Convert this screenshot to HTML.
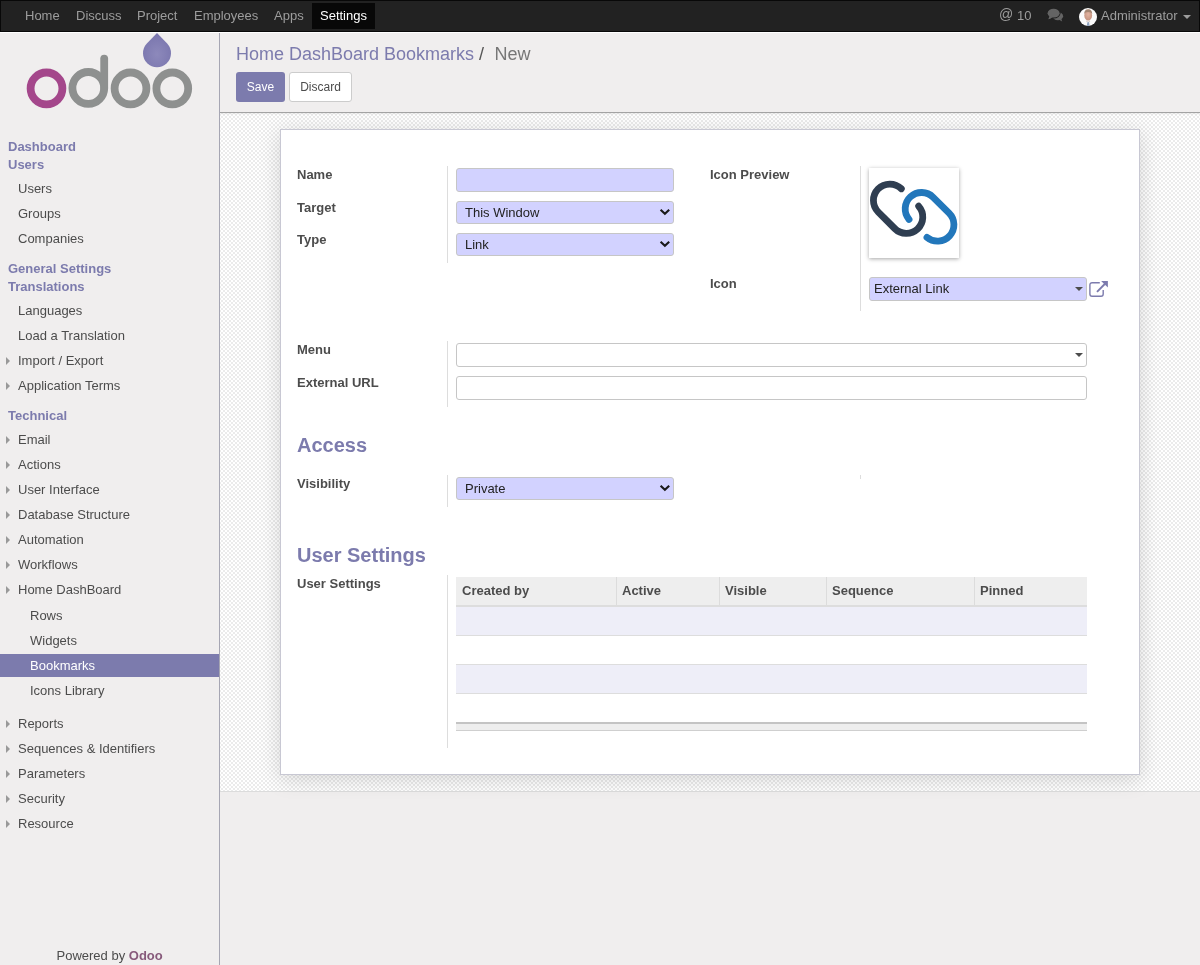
<!DOCTYPE html>
<html><head><meta charset="utf-8"><title>Odoo</title>
<style>
html,body{margin:0;padding:0;width:1200px;height:965px;overflow:hidden;background:#f0eeee;font-family:'Liberation Sans',sans-serif;}
.t{position:absolute;white-space:nowrap;line-height:20px;font-family:'Liberation Sans',sans-serif;}
.b{position:absolute;}
.btn{position:absolute;font-size:12px;line-height:30px;text-align:center;box-sizing:content-box;font-family:'Liberation Sans',sans-serif;}
.inp{position:absolute;border:1px solid #c6c6c6;border-radius:3px;}
.chk{background-color:#fff;background-image:repeating-conic-gradient(#ebebeb 0 25%,#fff 0 50%);
 background-size:4px 4px;background-position:1px 1px;}
</style></head><body><div id="root" style="position:absolute;left:0;top:0;width:1200px;height:965px;will-change:transform">
<div class="b" style="left:0px;top:0px;width:1200px;height:32px;background:#222;border:1px solid #080808;box-sizing:border-box;"></div>
<div class="b" style="left:312px;top:3px;width:63px;height:26px;background:#080808;"></div>
<div class="t" style="left:25px;top:6px;font-size:13px;color:#9d9d9d;">Home</div>
<div class="t" style="left:76px;top:6px;font-size:13px;color:#9d9d9d;">Discuss</div>
<div class="t" style="left:137px;top:6px;font-size:13px;color:#9d9d9d;">Project</div>
<div class="t" style="left:194px;top:6px;font-size:13px;color:#9d9d9d;">Employees</div>
<div class="t" style="left:274px;top:6px;font-size:13px;color:#9d9d9d;">Apps</div>
<div class="t" style="left:320px;top:6px;font-size:13px;color:#fff;">Settings</div>
<div class="t" style="left:999px;top:0px;font-size:14px;line-height:24px;color:#9d9d9d;transform:scaleY(1.1);transform-origin:0 0;">@</div>
<div class="t" style="left:1017px;top:6px;font-size:13px;color:#9d9d9d;">10</div>
<svg class="b" style="left:1047px;top:8px" width="17" height="15" viewBox="0 0 17 15">
<ellipse cx="10.8" cy="8.2" rx="5.3" ry="4.0" fill="#646464"/>
<path d="M12.2 11.8 L15.2 13.4 L14.2 10.6 Z" fill="#646464"/>
<path d="M2.3 8.2 L1.6 11.3 L5.6 9.4 Z" fill="#646464" stroke="#222" stroke-width="0"/>
<ellipse cx="6.6" cy="5.2" rx="6.9" ry="5.2" fill="#222"/>
<ellipse cx="6.6" cy="5.2" rx="6.0" ry="4.4" fill="#646464"/>
<path d="M2.4 8.0 L1.6 11.2 L5.8 9.2 Z" fill="#646464"/>
</svg>
<svg class="b" style="left:1079px;top:8px" width="18" height="18" viewBox="0 0 18 18">
<defs><clipPath id="av"><circle cx="9" cy="9" r="9"/></clipPath>
<radialGradient id="fg" cx="0.5" cy="0.4" r="0.6"><stop offset="0" stop-color="#e2b3a0"/><stop offset="1" stop-color="#c4927e"/></radialGradient></defs>
<g clip-path="url(#av)"><rect width="18" height="18" fill="#fbfbfb"/>
<ellipse cx="9.2" cy="7.4" rx="3.9" ry="5.2" fill="url(#fg)"/>
<path d="M5.2 6.2C5.0 2.8 6.8 1.2 9.2 1.2s4.2 1.6 4 5c-0.5-1.5-2-2.3-4-2.3s-3.5 0.8-4 2.3z" fill="#a48672"/>
<path d="M7.6 12.2c0.5 0.8 1 1.2 1.6 1.2s1.1-0.4 1.6-1.2l0.4 1.8-2 0.6-2-0.6z" fill="#d8d0cc"/>
<path d="M8.3 14.4l0.9-0.4 0.9 0.4 0.5 3.6h-2.8z" fill="#8fa3c0"/>
</g></svg>
<div class="t" style="left:1101px;top:6px;font-size:13px;color:#9d9d9d;">Administrator</div>
<div class="b" style="left:1183px;top:15px;width:0;height:0;border-left:4px solid transparent;border-right:4px solid transparent;border-top:4px solid #9d9d9d;"></div>
<div class="b" style="left:0px;top:32px;width:1200px;height:1px;background:#fff;"></div>
<div class="b" style="left:0px;top:33px;width:219px;height:932px;background:#f0eeee;"></div>
<div class="b" style="left:219px;top:33px;width:1px;height:932px;background:#a6a6b3;"></div>
<svg class="b" style="left:0px;top:33px" width="219" height="80" viewBox="0 33 219 80">
<defs><radialGradient id="dg" cx="0.5" cy="0.62" r="0.6"><stop offset="0" stop-color="#8d89bb"/><stop offset="1" stop-color="#7a76ae"/></radialGradient></defs>
<circle cx="46.5" cy="88.4" r="15.9" fill="none" stroke="#a4478b" stroke-width="7.8"/>
<circle cx="88.3" cy="87.9" r="15.9" fill="none" stroke="#8e908f" stroke-width="7.8"/>
<line x1="104.2" y1="58.6" x2="104.2" y2="87.9" stroke="#8e908f" stroke-width="7.8" stroke-linecap="round"/>
<circle cx="130.5" cy="88.4" r="15.9" fill="none" stroke="#8e908f" stroke-width="7.8"/>
<circle cx="172.3" cy="88.4" r="15.9" fill="none" stroke="#8e908f" stroke-width="7.8"/>
<path d="M157 33 L146.6 43.8 A14 14 0 1 0 167.4 43.8 Z" fill="url(#dg)"/>
</svg>
<div class="t" style="left:8px;top:137px;font-size:13px;font-weight:bold;color:#7c7bad;">Dashboard</div>
<div class="t" style="left:8px;top:155px;font-size:13px;font-weight:bold;color:#7c7bad;">Users</div>
<div class="t" style="left:8px;top:259px;font-size:13px;font-weight:bold;color:#7c7bad;">General Settings</div>
<div class="t" style="left:8px;top:277px;font-size:13px;font-weight:bold;color:#7c7bad;">Translations</div>
<div class="t" style="left:8px;top:406px;font-size:13px;font-weight:bold;color:#7c7bad;">Technical</div>
<div class="b" style="left:0px;top:654px;width:219px;height:23px;background:#7c7bad;"></div>
<div class="t" style="left:18px;top:179px;font-size:13px;color:#4c4c4c;">Users</div>
<div class="t" style="left:18px;top:204px;font-size:13px;color:#4c4c4c;">Groups</div>
<div class="t" style="left:18px;top:229px;font-size:13px;color:#4c4c4c;">Companies</div>
<div class="t" style="left:18px;top:301px;font-size:13px;color:#4c4c4c;">Languages</div>
<div class="t" style="left:18px;top:326px;font-size:13px;color:#4c4c4c;">Load a Translation</div>
<div class="t" style="left:18px;top:351px;font-size:13px;color:#4c4c4c;">Import / Export</div>
<div class="b" style="left:6px;top:357px;width:0;height:0;border-top:4px solid transparent;border-bottom:4px solid transparent;border-left:4px solid #999;"></div>
<div class="t" style="left:18px;top:376px;font-size:13px;color:#4c4c4c;">Application Terms</div>
<div class="b" style="left:6px;top:382px;width:0;height:0;border-top:4px solid transparent;border-bottom:4px solid transparent;border-left:4px solid #999;"></div>
<div class="t" style="left:18px;top:430px;font-size:13px;color:#4c4c4c;">Email</div>
<div class="b" style="left:6px;top:436px;width:0;height:0;border-top:4px solid transparent;border-bottom:4px solid transparent;border-left:4px solid #999;"></div>
<div class="t" style="left:18px;top:455px;font-size:13px;color:#4c4c4c;">Actions</div>
<div class="b" style="left:6px;top:461px;width:0;height:0;border-top:4px solid transparent;border-bottom:4px solid transparent;border-left:4px solid #999;"></div>
<div class="t" style="left:18px;top:480px;font-size:13px;color:#4c4c4c;">User Interface</div>
<div class="b" style="left:6px;top:486px;width:0;height:0;border-top:4px solid transparent;border-bottom:4px solid transparent;border-left:4px solid #999;"></div>
<div class="t" style="left:18px;top:505px;font-size:13px;color:#4c4c4c;">Database Structure</div>
<div class="b" style="left:6px;top:511px;width:0;height:0;border-top:4px solid transparent;border-bottom:4px solid transparent;border-left:4px solid #999;"></div>
<div class="t" style="left:18px;top:530px;font-size:13px;color:#4c4c4c;">Automation</div>
<div class="b" style="left:6px;top:536px;width:0;height:0;border-top:4px solid transparent;border-bottom:4px solid transparent;border-left:4px solid #999;"></div>
<div class="t" style="left:18px;top:555px;font-size:13px;color:#4c4c4c;">Workflows</div>
<div class="b" style="left:6px;top:561px;width:0;height:0;border-top:4px solid transparent;border-bottom:4px solid transparent;border-left:4px solid #999;"></div>
<div class="t" style="left:18px;top:580px;font-size:13px;color:#4c4c4c;">Home DashBoard</div>
<div class="b" style="left:6px;top:586px;width:0;height:0;border-top:4px solid transparent;border-bottom:4px solid transparent;border-left:4px solid #999;"></div>
<div class="t" style="left:30px;top:606px;font-size:13px;color:#4c4c4c;">Rows</div>
<div class="t" style="left:30px;top:631px;font-size:13px;color:#4c4c4c;">Widgets</div>
<div class="t" style="left:30px;top:656px;font-size:13px;color:#fff;">Bookmarks</div>
<div class="t" style="left:30px;top:681px;font-size:13px;color:#4c4c4c;">Icons Library</div>
<div class="t" style="left:18px;top:714px;font-size:13px;color:#4c4c4c;">Reports</div>
<div class="b" style="left:6px;top:720px;width:0;height:0;border-top:4px solid transparent;border-bottom:4px solid transparent;border-left:4px solid #999;"></div>
<div class="t" style="left:18px;top:739px;font-size:13px;color:#4c4c4c;">Sequences &amp; Identifiers</div>
<div class="b" style="left:6px;top:745px;width:0;height:0;border-top:4px solid transparent;border-bottom:4px solid transparent;border-left:4px solid #999;"></div>
<div class="t" style="left:18px;top:764px;font-size:13px;color:#4c4c4c;">Parameters</div>
<div class="b" style="left:6px;top:770px;width:0;height:0;border-top:4px solid transparent;border-bottom:4px solid transparent;border-left:4px solid #999;"></div>
<div class="t" style="left:18px;top:789px;font-size:13px;color:#4c4c4c;">Security</div>
<div class="b" style="left:6px;top:795px;width:0;height:0;border-top:4px solid transparent;border-bottom:4px solid transparent;border-left:4px solid #999;"></div>
<div class="t" style="left:18px;top:814px;font-size:13px;color:#4c4c4c;">Resource</div>
<div class="b" style="left:6px;top:820px;width:0;height:0;border-top:4px solid transparent;border-bottom:4px solid transparent;border-left:4px solid #999;"></div>
<div class="t" style="left:56.5px;top:946px;font-size:13px;color:#4c4c4c;">Powered by <b style="color:#875a7b">Odoo</b></div>
<div class="b" style="left:220px;top:33px;width:980px;height:79px;background:#f0eeee;"></div>
<div class="b" style="left:220px;top:112px;width:980px;height:1px;background:#a3a3a3;"></div>
<div class="t" style="left:236px;top:44px;font-size:18px;color:#7c7bad;">Home DashBoard Bookmarks</div>
<div class="t" style="left:479px;top:44px;font-size:18px;color:#555;">/</div>
<div class="t" style="left:494.6px;top:44px;font-size:18px;color:#777;">New</div>
<div class="btn" style="left:236px;top:72px;width:49px;height:30px;background:#7c7bad;color:#fff;border-radius:3px;">Save</div>
<div class="btn" style="left:289px;top:72px;width:61px;height:28px;background:#fff;color:#4c4c4c;border:1px solid #ccc;border-radius:3px;line-height:28px;">Discard</div>
<div class="b chk" style="left:220px;top:113px;width:980px;height:678px;"></div>
<div class="b" style="left:220px;top:113px;width:980px;height:2px;background:linear-gradient(rgba(0,0,0,0.07),rgba(0,0,0,0));"></div>
<div class="b" style="left:220px;top:791px;width:980px;height:1px;background:#dcdcdc;"></div>
<div class="b" style="left:220px;top:792px;width:980px;height:173px;background:#f0eeee;"></div>
<div class="b" style="left:280px;top:129px;width:858px;height:644px;background:#fff;border:1px solid #c8c8d3;box-shadow:0 4px 20px rgba(0,0,0,0.15);"></div>
<div class="t" style="left:297px;top:165px;font-size:13px;font-weight:bold;color:#4c4c4c;">Name</div>
<div class="t" style="left:297px;top:198px;font-size:13px;font-weight:bold;color:#4c4c4c;">Target</div>
<div class="t" style="left:297px;top:230px;font-size:13px;font-weight:bold;color:#4c4c4c;">Type</div>
<div class="b" style="left:447px;top:166px;width:1px;height:97px;background:#dddddd;"></div>
<div class="inp" style="left:456px;top:168px;width:216px;height:22px;background:#d2d2ff;"></div>
<div class="inp" style="left:456px;top:201px;width:216px;height:21px;background:#d2d2ff;"></div>
<div class="t" style="left:465px;top:203px;font-size:13px;color:#222;">This Window</div>
<svg class="b" style="left:660px;top:209px;overflow:visible" width="11" height="8" viewBox="0 0 11 8"><path d="M0.6 0.7 L4.9 4.8 L9.2 0.7" fill="none" stroke="#1a1a1a" stroke-width="2.1"/></svg>
<div class="inp" style="left:456px;top:233px;width:216px;height:21px;background:#d2d2ff;"></div>
<div class="t" style="left:465px;top:235px;font-size:13px;color:#222;">Link</div>
<svg class="b" style="left:660px;top:241px;overflow:visible" width="11" height="8" viewBox="0 0 11 8"><path d="M0.6 0.7 L4.9 4.8 L9.2 0.7" fill="none" stroke="#1a1a1a" stroke-width="2.1"/></svg>
<div class="t" style="left:710px;top:165px;font-size:13px;font-weight:bold;color:#4c4c4c;">Icon Preview</div>
<div class="t" style="left:710px;top:274px;font-size:13px;font-weight:bold;color:#4c4c4c;">Icon</div>
<div class="b" style="left:860px;top:166px;width:1px;height:145px;background:#dddddd;"></div>
<div class="b" style="left:869px;top:168px;width:90px;height:90px;background:#fff;box-shadow:0 1px 4px rgba(0,0,0,0.35);"></div>
<svg class="b" style="left:869px;top:168px" width="90" height="90" viewBox="0 0 90 90">
<path d="M49.68 38.14 A16.4 16.4 0 0 1 25.70 60.50 L9.30 44.10 A16.4 16.4 0 0 1 32.35 20.76" fill="none" stroke="#2f3e51" stroke-width="6.8" stroke-linecap="round"/>
<path d="M40.04 51.44 A16.4 16.4 0 0 1 64.20 29.30 L80.10 45.20 A16.4 16.4 0 0 1 57.96 69.36" fill="none" stroke="#2277bb" stroke-width="6.8" stroke-linecap="round"/>
</svg>
<div class="inp" style="left:869px;top:277px;width:216px;height:22px;background:#d2d2ff;"></div>
<div class="t" style="left:874px;top:279px;font-size:13px;color:#222;">External Link</div>
<div class="b" style="left:1075px;top:287px;width:0;height:0;border-left:4px solid transparent;border-right:4px solid transparent;border-top:4px solid #4c4c4c;"></div>
<svg class="b" style="left:1084px;top:274px" width="30" height="28" viewBox="0 0 30 28">
<path d="M15.8 8.7 H8.1 A2.2 2.2 0 0 0 5.9 10.9 V20 A2.2 2.2 0 0 0 8.1 22.2 H17 A2.2 2.2 0 0 0 19.2 20 V15.9" fill="none" stroke="#7c7bad" stroke-width="1.4"/>
<path d="M17.1 7 H23.9 V13.6 Z" fill="#7c7bad"/>
<path d="M13.0 17.8 L20.8 10.0" stroke="#7c7bad" stroke-width="1.9"/>
</svg>
<div class="t" style="left:297px;top:340px;font-size:13px;font-weight:bold;color:#4c4c4c;">Menu</div>
<div class="t" style="left:297px;top:373px;font-size:13px;font-weight:bold;color:#4c4c4c;">External URL</div>
<div class="b" style="left:447px;top:341px;width:1px;height:66px;background:#dddddd;"></div>
<div class="inp" style="left:456px;top:343px;width:629px;height:22px;background:#fff;"></div>
<div class="b" style="left:1075px;top:353px;width:0;height:0;border-left:4px solid transparent;border-right:4px solid transparent;border-top:4px solid #4c4c4c;"></div>
<div class="inp" style="left:456px;top:376px;width:629px;height:22px;background:#fff;"></div>
<div class="t" style="left:297px;top:435px;font-size:20px;font-weight:bold;color:#7c7bad;">Access</div>
<div class="t" style="left:297px;top:474px;font-size:13px;font-weight:bold;color:#4c4c4c;">Visibility</div>
<div class="b" style="left:447px;top:475px;width:1px;height:32px;background:#dddddd;"></div>
<div class="b" style="left:860px;top:475px;width:1px;height:4px;background:#dddddd;"></div>
<div class="inp" style="left:456px;top:477px;width:216px;height:21px;background:#d2d2ff;"></div>
<div class="t" style="left:465px;top:479px;font-size:13px;color:#222;">Private</div>
<svg class="b" style="left:660px;top:485px;overflow:visible" width="11" height="8" viewBox="0 0 11 8"><path d="M0.6 0.7 L4.9 4.8 L9.2 0.7" fill="none" stroke="#1a1a1a" stroke-width="2.1"/></svg>
<div class="t" style="left:297px;top:545px;font-size:20px;font-weight:bold;color:#7c7bad;">User Settings</div>
<div class="t" style="left:297px;top:574px;font-size:13px;font-weight:bold;color:#4c4c4c;">User Settings</div>
<div class="b" style="left:447px;top:575px;width:1px;height:173px;background:#dddddd;"></div>
<div class="b" style="left:456px;top:577px;width:631px;height:28px;background:#eeeeee;"></div>
<div class="b" style="left:616px;top:577px;width:1px;height:28px;background:#dcdcdc;"></div>
<div class="b" style="left:719px;top:577px;width:1px;height:28px;background:#dcdcdc;"></div>
<div class="b" style="left:826px;top:577px;width:1px;height:28px;background:#dcdcdc;"></div>
<div class="b" style="left:974px;top:577px;width:1px;height:28px;background:#dcdcdc;"></div>
<div class="t" style="left:462px;top:581px;font-size:13px;font-weight:bold;color:#4c4c4c;">Created by</div>
<div class="t" style="left:622px;top:581px;font-size:13px;font-weight:bold;color:#4c4c4c;">Active</div>
<div class="t" style="left:725px;top:581px;font-size:13px;font-weight:bold;color:#4c4c4c;">Visible</div>
<div class="t" style="left:832px;top:581px;font-size:13px;font-weight:bold;color:#4c4c4c;">Sequence</div>
<div class="t" style="left:980px;top:581px;font-size:13px;font-weight:bold;color:#4c4c4c;">Pinned</div>
<div class="b" style="left:456px;top:605px;width:631px;height:2px;background:#dddddd;"></div>
<div class="b" style="left:456px;top:607px;width:631px;height:28px;background:#eeeef8;"></div>
<div class="b" style="left:456px;top:635px;width:631px;height:1px;background:#dddddd;"></div>
<div class="b" style="left:456px;top:664px;width:631px;height:1px;background:#dddddd;"></div>
<div class="b" style="left:456px;top:665px;width:631px;height:28px;background:#eeeef8;"></div>
<div class="b" style="left:456px;top:693px;width:631px;height:1px;background:#dddddd;"></div>
<div class="b" style="left:456px;top:722px;width:631px;height:2px;background:#c4c4c4;"></div>
<div class="b" style="left:456px;top:724px;width:631px;height:6px;background:#eeeeee;"></div>
<div class="b" style="left:456px;top:730px;width:631px;height:1px;background:#cfcfcf;"></div>
</div></body></html>
